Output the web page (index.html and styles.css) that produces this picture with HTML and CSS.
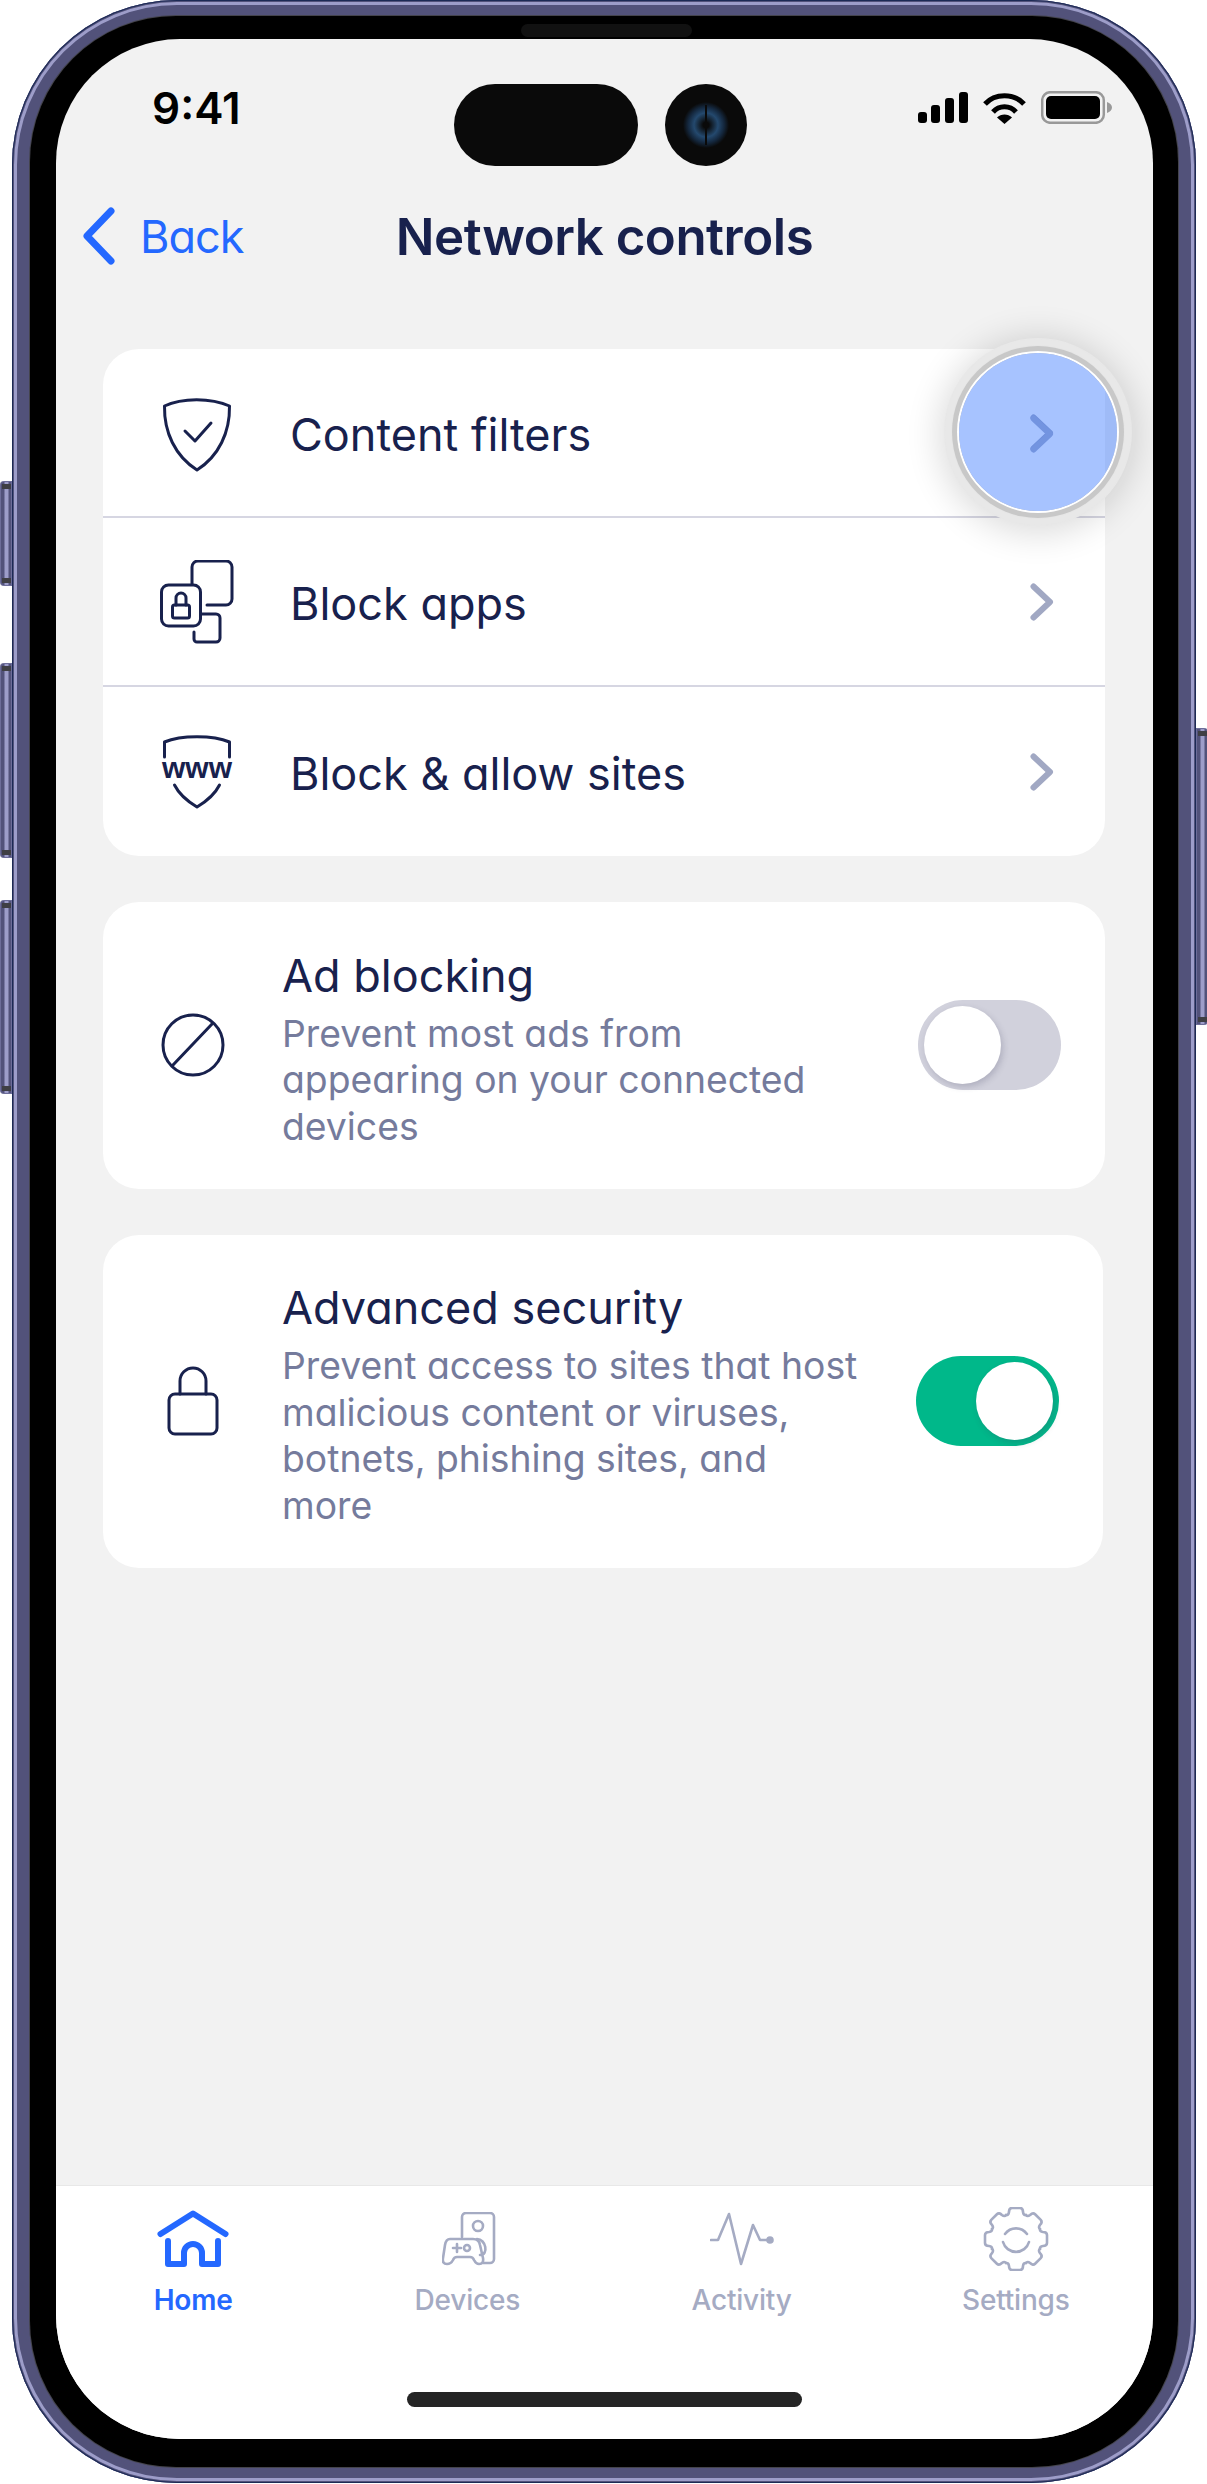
FILE: index.html
```html
<!DOCTYPE html>
<html>
<head>
    <title>Network controls</title>
    <link rel="stylesheet" href="styles.css">
</head>
<body>
    <div class="phone">
        <span class="side-btn btn-silent"></span>
        <span class="side-btn btn-up"></span>
        <span class="side-btn btn-down"></span>
        <span class="side-btn btn-power"></span>
        <div class="bezel">
            <span class="speaker"></span>
            <div class="screen">
                <div class="status-bar">
                    <span class="time">9:41</span>
                    <span class="island"></span>
                    <span class="camera"></span>
                    <div class="status-icons">
                        <svg width="50" height="31" viewBox="0 0 50 31"><rect x="0" y="20" width="9" height="11" rx="3"/><rect x="13" y="13" width="9" height="18" rx="3"/><rect x="27" y="6" width="9" height="25" rx="3"/><rect x="41" y="0" width="9" height="31" rx="3"/></svg>
                        <svg width="45" height="33" viewBox="0 0 45 33"><path d="M3 13 C13 2 32 2 42 13" fill="none" stroke="#000" stroke-width="5"/><path d="M11 21 C17 14 28 14 34 21" fill="none" stroke="#000" stroke-width="5"/><path d="M15 26.5 C19 22.5 26 22.5 30 26.5 L22.5 33 Z"/></svg>
                        <svg width="71" height="33" viewBox="0 0 71 33"><rect x="1.2" y="1.2" width="61.6" height="30.6" rx="8" fill="none" stroke="#999" stroke-width="2.5"/><rect x="5" y="5" width="54" height="23" rx="5"/><path d="M66 11 C69 12 71 14 71 16.5 C71 19 69 21 66 22 Z" fill="#999"/></svg>
                    </div>
                </div>

                <div class="nav-bar">
                    <a class="back-link">
                        <svg width="34" height="60" viewBox="0 0 34 60"><path d="M29 5 L5 30 L29 55" fill="none" stroke="#2468ff" stroke-width="7" stroke-linecap="round" stroke-linejoin="round"/></svg>
                        <span>Back</span>
                    </a>
                    <h1 class="nav-title">Network controls</h1>
                </div>

                <div class="content">
                    <div class="card">
                        <div class="list-row">
                            <div class="row-icon shield">
                                <svg width="70" height="74" viewBox="0 0 70 74" class="line-icon"><path d="M2.5 8 C20 -0.5 49 -0.5 67.5 8 C68 34 57 58 35 72 C13 58 2 34 2.5 8 Z"/><path d="M23 33 L33 43 L49 25"/></svg>
                            </div>
                            <span class="row-label">Content filters</span>
                            <svg class="chevron" width="24" height="38" viewBox="0 0 24 38"><path d="M3.5 3.5 L20 19 L3.5 34.5"/></svg>
                        </div>
                        <div class="list-row">
                            <div class="row-icon">
                                <svg width="74" height="84" viewBox="0 0 74 84" class="line-icon"><path d="M32 24 V7 a6 6 0 0 1 6 -6 H66 a6 6 0 0 1 6 6 V39 a6 6 0 0 1 -6 6 H47"/><rect x="1.5" y="25" width="39" height="41" rx="7"/><rect x="12.5" y="45" width="17" height="13" rx="2"/><path d="M16 45 V38 a5 5 0 0 1 10 0 V45"/><path d="M42 54 H56 a4 4 0 0 1 4 4 V78 a4 4 0 0 1 -4 4 H37 a3 3 0 0 1 -3 -3 V72"/></svg>
                            </div>
                            <span class="row-label">Block apps</span>
                            <svg class="chevron" width="24" height="38" viewBox="0 0 24 38"><path d="M3.5 3.5 L20 19 L3.5 34.5"/></svg>
                        </div>
                        <div class="list-row">
                            <div class="row-icon">
                                <svg width="72" height="74" viewBox="0 0 72 74" class="line-icon"><path d="M3.5 22 V7 C20 0 52 0 68.5 7 V22"/><text x="36" y="43" text-anchor="middle" class="www">www</text><path d="M13.5 50 C18 59 26 66 36 72 C46 66 54 59 58.5 50"/></svg>
                            </div>
                            <span class="row-label">Block &amp; allow sites</span>
                            <svg class="chevron" width="24" height="38" viewBox="0 0 24 38"><path d="M3.5 3.5 L20 19 L3.5 34.5"/></svg>
                        </div>
                    </div>

                    <div class="card toggle-card">
                        <div class="toggle-icon">
                            <svg width="64" height="64" viewBox="0 0 64 64" class="line-icon"><circle cx="32" cy="32" r="30"/><path d="M51 11 L12 52"/></svg>
                        </div>
                        <div class="toggle-text">
                            <div class="toggle-title">Ad blocking</div>
                            <div class="toggle-desc">Prevent most ads from<br>appearing on your connected<br>devices</div>
                        </div>
                        <span class="toggle"></span>
                    </div>

                    <div class="card toggle-card security">
                        <div class="toggle-icon">
                            <svg width="52" height="70" viewBox="0 0 52 70" class="line-icon"><rect x="2" y="28" width="48" height="40" rx="6"/><path d="M13 28 V15 a13 13 0 0 1 26 0 V28"/></svg>
                        </div>
                        <div class="toggle-text">
                            <div class="toggle-title">Advanced security</div>
                            <div class="toggle-desc">Prevent access to sites that host<br>malicious content or viruses,<br>botnets, phishing sites, and<br>more</div>
                        </div>
                        <span class="toggle on"></span>
                    </div>
                </div>

                <div class="tab-bar">
                    <div class="tabs">
                        <div class="tab active">
                            <div class="tab-icon">
                                <svg width="72" height="58" viewBox="0 0 72 58"><path d="M3.5 24 L36 3.5 L68.5 24" fill="none" stroke="#2468ff" stroke-width="6" stroke-linecap="round" stroke-linejoin="round"/><path d="M11 31 V54 H27 V43 a9 9 0 0 1 18 0 V54 H61 V31" fill="none" stroke="#2468ff" stroke-width="6" stroke-linecap="round" stroke-linejoin="round"/></svg>
                            </div>
                            <span class="tab-label">Home</span>
                        </div>
                        <div class="tab">
                            <div class="tab-icon">
                                <svg width="54" height="54" viewBox="0 0 54 54" class="tab-line devices-icon"><path d="M20 25 V5 a4 4 0 0 1 4 -4 H48 a4 4 0 0 1 4 4 V47 a4 4 0 0 1 -4 4 H41"/><circle cx="36" cy="14" r="5"/><path d="M35 27 C44 27 47 43 38 43"/><path d="M8 27 H31 Q37 27 38 33 L41 46 Q42 52 37 52 Q34 52 32 48 Q31 45 28 45 H15 Q12 45 11 48 Q9 52 5 52 Q0 52 1 46 L3 33 Q4 27 8 27 Z"/><path d="M11 36 H19 M15 32 V40"/><circle cx="25" cy="36" r="3"/></svg>
                            </div>
                            <span class="tab-label">Devices</span>
                        </div>
                        <div class="tab">
                            <div class="tab-icon">
                                <svg width="64" height="54" viewBox="0 0 64 54" class="tab-line"><path d="M1 28 H8 L19 2 L31 52 L43 13 L50 28 H60"/><circle cx="60" cy="28" r="2.5" class="dot"/></svg>
                            </div>
                            <span class="tab-label">Activity</span>
                        </div>
                        <div class="tab">
                            <div class="tab-icon">
                                <svg width="66" height="64" viewBox="-33 -32 66 64" class="tab-line">
                                    <path id="tooth" d="M-10 -24 Q-7.5 -23.5 -7 -27 Q-7 -31 -4 -31 H4 Q7 -31 7 -27 Q7.5 -23.5 10 -24"/>
                                    <use href="#tooth" transform="rotate(45)"/>
                                    <use href="#tooth" transform="rotate(90)"/>
                                    <use href="#tooth" transform="rotate(135)"/>
                                    <use href="#tooth" transform="rotate(180)"/>
                                    <use href="#tooth" transform="rotate(225)"/>
                                    <use href="#tooth" transform="rotate(270)"/>
                                    <use href="#tooth" transform="rotate(315)"/>
                                    <path d="M-11 -5 A13.5 13.5 0 0 1 11 -5 M13 3 A13.5 13.5 0 0 1 -13 3"/>
                                </svg>
                            </div>
                            <span class="tab-label">Settings</span>
                        </div>
                    </div>
                    <span class="home-indicator"></span>
                </div>
            </div>
        </div>
        <div class="touch-dot">
            <svg class="touch-chevron" width="24" height="38" viewBox="0 0 24 38"><path d="M3.5 3.5 L20 19 L3.5 34.5"/></svg>
        </div>
    </div>
</body>
</html>
```

FILE: styles.css
```css
* {
    box-sizing: border-box;
}
html, body {
    margin: 0;
    padding: 0;
}
body {
    width: 1207px;
    height: 2484px;
    background-color: #fff;
    overflow: hidden;
    font-family: 'Inter', 'Lato', sans-serif;
    font-feature-settings: "cv11";
    color: #18214d;
}

/* device frame */
.phone {
    position: relative;
    width: 1184px;
    height: 2483px;
    margin-left: 12px;
    padding: 16px 18px 16px 18px;
    background-color: #52527a;
    border-radius: 165px;
    box-shadow: inset 0 0 0 1px #1c2a55, inset 0 0 0 2px #52527a, inset 0 0 0 5px #9d9dc9;
}
.bezel {
    position: relative;
    height: 100%;
    padding: 23px 25px 28px 26px;
    background-color: #000;
    border-radius: 146px;
    box-shadow: 0 0 0 1px #44444c;
}
.speaker {
    position: absolute;
    top: 8px;
    left: 491px;
    width: 171px;
    height: 13px;
    background-color: #111;
    border-radius: 7px;
}
.screen {
    display: flex;
    flex-direction: column;
    height: 100%;
    background-color: #f2f2f2;
    border-radius: 124px;
    overflow: hidden;
}
.side-btn {
    position: absolute;
    left: -12px;
    width: 12px;
    background:
        linear-gradient(#3f3f44, #3f3f44) center 3px / 9px 5px no-repeat,
        linear-gradient(#3f3f44, #3f3f44) center bottom 3px / 9px 5px no-repeat,
        linear-gradient(to right, #52527a 0, #52527a 4px, #9d9dc9 5px, #9d9dc9 8px, #52527a 9px);
    border-radius: 4px 0 0 4px;
    box-shadow: inset 0 0 0 1px #6d6d99;
}
.btn-silent {
    top: 481px;
    height: 105px;
}
.btn-up {
    top: 663px;
    height: 195px;
}
.btn-down {
    top: 900px;
    height: 194px;
}
.btn-power {
    left: 1184px;
    top: 728px;
    height: 297px;
    border-radius: 0 4px 4px 0;
}

/* status bar */
.status-bar {
    display: flex;
    align-items: center;
    flex-shrink: 0;
    padding: 45px 41px 0 96px;
}
.time {
    width: 302px;
    margin-top: -34px;
    font-family: 'Inter', sans-serif;
    font-size: 44px;
    line-height: 50px;
    font-weight: 600;
    color: #000;
}
.island {
    width: 184px;
    height: 82px;
    background-color: #0a0a0a;
    border-radius: 41px;
}
.camera {
    width: 82px;
    height: 82px;
    margin-left: 27px;
    border-radius: 50%;
    background:
        linear-gradient(#0a0a0a, #0a0a0a) center / 2px 40px no-repeat,
        radial-gradient(circle, #0a0a0a 0, #0a0a0a 3px, #24496e 12px, #14273d 18px, #0a0a0a 23px);
}
.status-icons {
    display: flex;
    align-items: center;
    gap: 14px;
    margin-left: auto;
    margin-top: -36px;
}

/* nav */
.nav-bar {
    position: relative;
    display: flex;
    align-items: center;
    justify-content: center;
    flex-shrink: 0;
    height: 140px;
}
.back-link {
    position: absolute;
    left: 26px;
    top: 40px;
    display: flex;
    align-items: center;
    gap: 24px;
    font-size: 45px;
    letter-spacing: -1px;
    color: #2468ff;
}
.nav-title {
    margin: 0;
    font-size: 51px;
    font-weight: 600;
    letter-spacing: -0.5px;
}

/* cards */
.content {
    display: flex;
    flex-direction: column;
    flex: 1;
    gap: 46px;
    margin: 43px 48px 0 47px;
}
.card {
    background-color: #fff;
    border-radius: 36px;
}
.list-row {
    display: flex;
    align-items: center;
    height: 169px;
    padding-right: 51px;
    border-bottom: 2px solid #d6d6e2;
}
.list-row:last-child {
    border-bottom: none;
}
.row-icon {
    display: flex;
    justify-content: center;
    width: 187px;
}
.row-icon.shield {
    padding-top: 4px;
}
.row-label {
    flex: 1;
    padding-top: 3px;
    font-size: 45px;
}
.line-icon {
    fill: none;
    stroke: #18214d;
    stroke-width: 3;
    stroke-linecap: round;
    stroke-linejoin: round;
}
.www {
    fill: #18214d;
    stroke: none;
    font-family: 'Liberation Sans', sans-serif;
    font-size: 30px;
    font-weight: 700;
}
.chevron, .touch-chevron {
    fill: none;
    stroke: #a1a8c3;
    stroke-width: 6;
    stroke-linecap: round;
    stroke-linejoin: round;
}
.toggle-card {
    display: flex;
    align-items: center;
    padding: 38.5px 44px 38.5px 0;
}
.toggle-card.security {
    margin-right: 2px;
}
.toggle-icon {
    display: flex;
    justify-content: center;
    flex-shrink: 0;
    width: 179px;
}
.toggle-text {
    flex: 1;
}
.toggle-title {
    font-size: 45px;
    line-height: 70px;
}
.toggle-desc {
    font-size: 37.3px;
    line-height: 46.5px;
    color: #757b9c;
}
.toggle {
    position: relative;
    flex-shrink: 0;
    width: 143px;
    height: 90px;
    background-color: #d1d1dc;
    border-radius: 45px;
}
.toggle::after {
    content: "";
    position: absolute;
    top: 6px;
    left: 6px;
    width: 77px;
    height: 78px;
    background-color: #fff;
    border-radius: 50%;
    box-shadow: 2px 3px 6px rgba(60, 60, 90, 0.22);
}
.toggle.on {
    background-color: #00b88a;
}
.toggle.on::after {
    left: 60px;
}

/* bottom tabs */
.tab-bar {
    display: flex;
    flex-direction: column;
    flex-shrink: 0;
    height: 254px;
    padding-top: 21px;
    background-color: #fff;
    border-top: 1px solid #e8e8e8;
}
.tabs {
    display: grid;
    grid-template-columns: repeat(4, 1fr);
}
.tab {
    display: flex;
    flex-direction: column;
    align-items: center;
}
.tab-icon {
    display: flex;
    align-items: center;
    justify-content: center;
    height: 64px;
}
.devices-icon {
    margin-left: 4px;
}
.tab-label {
    margin-top: 12px;
    font-size: 28px;
    line-height: 34px;
    font-weight: 500;
    letter-spacing: -0.2px;
    color: #a5abc3;
}
.tab.active .tab-label {
    color: #2468ff;
    font-weight: 600;
}
.tab-line {
    fill: none;
    stroke: #a5abc3;
    stroke-width: 2.6;
    stroke-linecap: round;
    stroke-linejoin: round;
}
.dot {
    fill: #a5abc3;
}
.home-indicator {
    width: 395px;
    height: 15px;
    margin: auto auto 32px auto;
    background-color: #252525;
    border-radius: 8px;
}

/* tap marker over the first row */
.touch-dot {
    position: absolute;
    left: 947px;
    top: 353px;
    width: 158px;
    height: 158px;
    background-color: rgba(36, 104, 255, 0.4);
    border-radius: 50%;
    box-shadow:
        0 0 0 2px #fff,
        0 0 0 7px #c8c8c8,
        0 0 0 8px #e6e6e6,
        0 0 0 14px rgba(232, 232, 232, 0.6),
        0 0 0 15px #e8e8e8,
        0 3px 34px 20px rgba(0, 0, 0, 0.14);
}
.touch-chevron {
    position: absolute;
    left: 71px;
    top: 62px;
    stroke: #7394e0;
}
```
